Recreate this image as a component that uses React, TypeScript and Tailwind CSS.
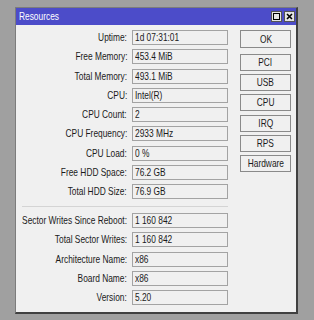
const rowsTop = [
  { label: 'Uptime:', value: '1d 07:31:01' },
  { label: 'Free Memory:', value: '453.4 MiB' },
  { label: 'Total Memory:', value: '493.1 MiB' },
  { label: 'CPU:', value: 'Intel(R)' },
  { label: 'CPU Count:', value: '2' },
  { label: 'CPU Frequency:', value: '2933 MHz' },
  { label: 'CPU Load:', value: '0 %' },
  { label: 'Free HDD Space:', value: '76.2 GB' },
  { label: 'Total HDD Size:', value: '76.9 GB' },
];

const rowsBottom = [
  { label: 'Sector Writes Since Reboot:', value: '1 160 842' },
  { label: 'Total Sector Writes:', value: '1 160 842' },
  { label: 'Architecture Name:', value: 'x86' },
  { label: 'Board Name:', value: 'x86' },
  { label: 'Version:', value: '5.20' },
];

const buttons = ['PCI', 'USB', 'CPU', 'IRQ', 'RPS', 'Hardware'];

// the original UI font is a narrow one, so text gets squeezed horizontally
function Row({ label, value }: { label: string; value: string }) {
  return (
    <div className="flex items-center h-[15px]">
      <div className="w-[106px] flex justify-end leading-none text-[#1a1a1a]">
        <span className="shrink-0 whitespace-nowrap scale-x-[0.76] origin-right">{label}</span>
      </div>
      <div className="ml-[5px] w-[96px] h-[15px] border border-[#a3a3a3] bg-[#f0f0f0] pl-[2px] flex items-center leading-none text-[#1a1a1a]">
        <span className="shrink-0 whitespace-nowrap scale-x-[0.76] origin-left">{value}</span>
      </div>
    </div>
  );
}

function Btn({ text, tall }: { text: string; tall?: boolean }) {
  return (
    <div
      className={`w-[51px] ${tall ? 'h-[18px]' : 'h-[17px]'} border border-[#8a8a8a] bg-[#f0f0f0] flex items-center justify-center leading-none text-[#1a1a1a]`}
    >
      <span className="shrink-0 whitespace-nowrap scale-x-[0.76]">{text}</span>
    </div>
  );
}

export default function App() {
  return (
    <div className="w-[314px] h-[320px] bg-[#a0a0a0] pt-[7px] pl-[15px] font-['Liberation_Sans',Arial,sans-serif] text-[11px]">
      <div className="w-[283px] h-[307px] bg-[#f0f0f0] border-l border-t border-[#7c7c7c] border-r-2 border-b-2 border-r-[#404040] border-b-[#404040] flex flex-col">
        {/* title bar */}
        <div className="h-[17px] bg-[#4c4cc9] flex items-center pl-[3px] pr-[1px]">
          <span className="text-white leading-none whitespace-nowrap scale-x-[0.76] origin-left">Resources</span>
          <div className="ml-auto flex gap-[2px]">
            <div className="w-[11px] h-[11px] bg-[#e4e4e4] border border-[#555] flex items-center justify-center">
              <div className="w-[7px] h-[7px] border border-black" />
            </div>
            <div className="w-[11px] h-[11px] bg-[#e4e4e4] border border-[#555] flex items-center justify-center">
              <svg width="7" height="7" viewBox="0 0 7 7">
                <path d="M1 1 L6 6 M6 1 L1 6" stroke="black" strokeWidth="1.6" />
              </svg>
            </div>
          </div>
        </div>

        {/* body */}
        <div className="flex pt-[5px] pl-[5px]">
          <div className="flex flex-col">
            <div className="flex flex-col gap-[4.25px]">
              {rowsTop.map((r) => (
                <Row key={r.label} {...r} />
              ))}
            </div>
            <div className="mt-[7px] ml-[1px] w-[206px] border-t border-[#d4d4d4]" />
            <div className="mt-[6px] flex flex-col gap-[4.25px]">
              {rowsBottom.map((r) => (
                <Row key={r.label} {...r} />
              ))}
            </div>
          </div>

          <div className="ml-[12px] flex flex-col">
            <Btn text="OK" tall />
            <div className="mt-[6px] flex flex-col gap-[3.2px]">
              {buttons.map((b) => (
                <Btn key={b} text={b} />
              ))}
            </div>
          </div>
        </div>
      </div>
    </div>
  );
}
